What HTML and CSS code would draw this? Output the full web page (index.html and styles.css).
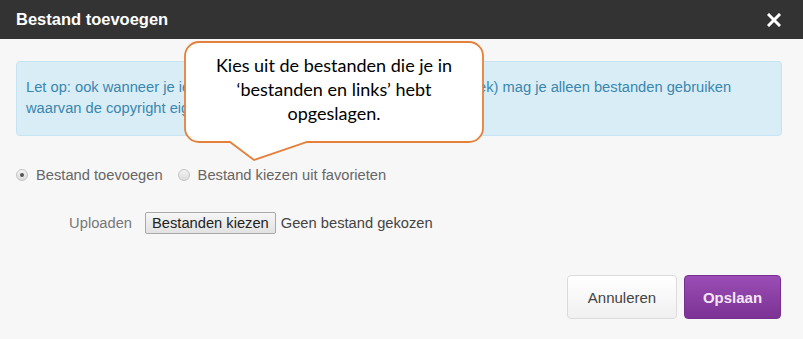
FILE: index.html
```html
<!DOCTYPE html>
<html lang="nl">
<head>
    <meta charset="UTF-8">
    <meta name="viewport" content="width=device-width, initial-scale=1.0">
    <title>Bestand toevoegen</title>
    <link rel="stylesheet" href="styles.css">
</head>
<body>
    <div class="modal">
        <header class="modal-head">
            <h2>Bestand toevoegen</h2>
            <button class="close" aria-label="Sluiten">
                <svg width="14" height="14" viewBox="0 0 14 14">
                    <path d="M2 2 L12 12 M12 2 L2 12" stroke="#fff" stroke-width="3" stroke-linecap="square"/>
                </svg>
            </button>
        </header>

        <div class="modal-body">
            <div class="alert">
                Let op: ook wanneer je iets uit je favorieten kiest (bijv. uit de mediatheek) mag je alleen bestanden gebruiken<br>
                waarvan de copyright eigenaar toestemming heeft gegeven.
            </div>

            <div class="radios">
                <label class="radio"><span class="dot checked"></span>Bestand toevoegen</label>
                <label class="radio"><span class="dot"></span>Bestand kiezen uit favorieten</label>
            </div>

            <div class="upload-row">
                <span class="upload-label">Uploaden</span>
                <span class="file-btn">Bestanden kiezen</span>
                <span class="file-name">Geen bestand gekozen</span>
            </div>
        </div>

        <div class="modal-foot">
            <button class="btn btn-default">Annuleren</button>
            <button class="btn btn-primary">Opslaan</button>
        </div>

        <div class="callout">
            <svg class="callout-shape" width="302" height="122" viewBox="0 0 302 122">
                <path d="M15 1 H285 A14 14 0 0 1 299 15 V87 A14 14 0 0 1 285 101 H123 L70 119 L46 101 H15 A14 14 0 0 1 1 87 V15 A14 14 0 0 1 15 1 Z"
                      fill="#fff" stroke="#e5803b" stroke-width="1.8"/>
            </svg>
            <p>Kies uit de bestanden die je in<br>‘bestanden en links’ hebt<br>opgeslagen.</p>
        </div>
    </div>
</body>
</html>
```

FILE: styles.css
```css
body {
    margin: 0;
    background: #f7f7f7;
    font-family: "Liberation Sans", Arial, sans-serif;
    font-size: 14.7px;
    color: #333;
}
.modal {
    position: relative;
    width: 803px;
    height: 339px;
}
.modal-head {
    height: 39px;
    background: #333;
    display: flex;
    align-items: center;
    justify-content: space-between;
    padding: 0 22px 0 16px;
}
.modal-head h2 {
    margin: 0;
    color: #fff;
    font-size: 16.5px;
    font-weight: bold;
}
.close {
    background: none;
    border: none;
    padding: 0;
    width: 14px;
    height: 14px;
    cursor: pointer;
    display: flex;
}
.modal-body {
    padding: 22px 21px 0 16px;
}
.alert {
    background: #d9edf7;
    border: 1px solid #c6e4f1;
    border-radius: 4px;
    color: #3a87ad;
    line-height: 21px;
    padding: 15px 9px 16px;
    white-space: nowrap;
    overflow: hidden;
}
.radios {
    display: flex;
    gap: 15px;
    margin-top: 29px;
    color: #666;
}
.radio {
    display: flex;
    align-items: center;
    gap: 8px;
    line-height: 20px;
}
.dot {
    display: inline-block;
    width: 10px;
    height: 10px;
    border: 1px solid #c4c4c4;
    border-radius: 50%;
    background: linear-gradient(#f2f2f2, #dcdcdc);
    position: relative;
}
.dot.checked::after {
    content: "";
    position: absolute;
    left: 3px;
    top: 3px;
    width: 4px;
    height: 4px;
    border-radius: 50%;
    background: #555;
}
.upload-row {
    display: flex;
    align-items: center;
    margin-top: 27px;
}
.upload-label {
    width: 116px;
    text-align: right;
    margin-right: 13px;
    color: #777;
}
.file-btn {
    border: 1px solid #a9a9a9;
    border-radius: 2px;
    background: linear-gradient(#f6f6f6, #e2e2e2);
    color: #222;
    padding: 2px 6px;
    line-height: 16px;
    margin-right: 5px;
}
.file-name {
    color: #444;
}
.modal-foot {
    position: absolute;
    right: 22px;
    bottom: 20px;
    display: flex;
    gap: 7px;
}
.btn {
    height: 44px;
    border-radius: 4px;
    font-family: "Liberation Sans", Arial, sans-serif;
    font-size: 15px;
    cursor: pointer;
}
.btn-default {
    width: 110px;
    background: linear-gradient(#fff, #f0f0f0);
    border: 1px solid #dcdcdc;
    color: #444;
}
.btn-primary {
    width: 97px;
    background: linear-gradient(#9b4db5, #7b3294);
    border: 1px solid #763090;
    color: #f3e6f8;
    font-weight: bold;
}
.callout {
    position: absolute;
    left: 184px;
    top: 41px;
    width: 302px;
    height: 122px;
}
.callout-shape {
    position: absolute;
    left: 0;
    top: 0;
}
.callout p {
    position: relative;
    margin: 0;
    width: 300px;
    padding-top: 12px;
    text-align: center;
    font-family: Lato, "Open Sans", sans-serif;
    font-size: 18px;
    line-height: 24px;
    color: #000;
}
```
